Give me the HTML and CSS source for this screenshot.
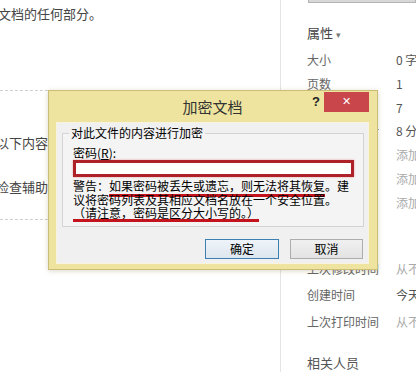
FILE: index.html
```html
<!DOCTYPE html>
<html lang="zh-CN">
<head>
  <meta charset="UTF-8" />
  <meta name="viewport" content="width=device-width, initial-scale=1.0"/>
  <title>信息 - 加密文档</title>
  <link rel="stylesheet" href="styles.css">
</head>
<body>
  <div class="page">
    <div class="left">
      <p class="intro">文档的任何部分。</p>
      <div class="dash dash-top"></div>
      <p class="note note-1">以下内容</p>
      <p class="note note-2">检查辅助</p>
      <div class="dash dash-bottom"></div>
    </div>

    <div class="right">
      <div class="thumb"></div>
      <h3 class="group-title">属性 <span class="caret">▾</span></h3>
      <div class="props">
        <span class="label">大小</span><span class="value">0 字节</span>
        <span class="label">页数</span><span class="value">1</span>
        <span class="label">字数</span><span class="value">7</span>
        <span class="label">编辑时间总计</span><span class="value">8 分钟</span>
        <span class="label">标题</span><span class="value muted">添加标题</span>
        <span class="label">标记</span><span class="value muted">添加标记</span>
        <span class="label">备注</span><span class="value muted">添加备注</span>
      </div>
      <h3 class="group-title dates-title">相关日期</h3>
      <div class="props dates">
        <span class="label">上次修改时间</span><span class="value muted">从不</span>
        <span class="label">创建时间</span><span class="value">今天 10:12</span>
        <span class="label">上次打印时间</span><span class="value muted">从不</span>
      </div>
      <h3 class="group-title people-title">相关人员</h3>
    </div>
  </div>

  <div class="dialog">
    <div class="titlebar">
      <span class="title">加密文档</span>
      <span class="help">?</span>
      <span class="close">&#x2715;</span>
    </div>
    <div class="client">
      <fieldset class="group">
        <legend>对此文件的内容进行加密</legend>
        <div class="field-label">密码(<u>R</u>):</div>
        <div class="password"></div>
        <div class="warning">
          <div>警告：<span class="mark">如果密码被丢失或遗忘，则无法将其恢复</span>。建</div>
          <div>议将密码列表及其相应文档名放在一个安全位置。</div>
          <div><span class="mark mark-low">（请注意，密码是区分大小写的。）</span></div>
        </div>
      </fieldset>
      <div class="buttons">
        <button class="btn btn-default">确定</button>
        <button class="btn">取消</button>
      </div>
    </div>
  </div>
</body>
</html>
```

FILE: styles.css
```css
body {
  margin: 0;
  width: 416px;
  height: 372px;
  overflow: hidden;
  position: relative;
  background: #fff;
  font-family: "Noto Sans CJK SC", "Noto Sans", sans-serif;
  color: #444;
}

p, h3 {
  margin: 0;
}

.page {
  display: flex;
  height: 372px;
}

/* left column */

.left {
  width: 280px;
  flex-shrink: 0;
  border-right: 1px solid #e4e4e4;
  padding-top: 4px;
  overflow: hidden;
  white-space: nowrap;
}

.intro {
  font-size: 13px;
  line-height: 20px;
  margin-left: -2px;
  color: #444;
}

.dash {
  width: 262px;
  border-top: 1px dashed #cfcfcf;
}

.dash-top {
  margin-top: 66px;
}

.note {
  font-size: 13px;
  line-height: 20px;
  margin-left: -4px;
  color: #444;
}

.note-1 {
  margin-top: 42px;
}

.note-2 {
  margin-top: 24px;
}

.dash-bottom {
  margin-top: 22px;
}

/* right column */

.right {
  flex: 1;
  padding-left: 26px;
  white-space: nowrap;
  overflow: hidden;
}

.thumb {
  height: 2px;
  margin-left: 1px;
  border: 1px solid #b4b4b4;
  border-top: none;
  background: #d8d8d8;
}

.group-title {
  font-size: 13px;
  font-weight: normal;
  line-height: 20px;
  color: #444;
  margin-top: 20px;
}

.caret {
  font-size: 9px;
  color: #777;
}

.props {
  display: grid;
  grid-template-columns: 89px auto;
  margin-top: 3px;
  font-size: 12px;
  line-height: 23.8px;
}

.label {
  color: #666;
}

.value {
  color: #555;
}

.value.muted {
  color: #aaa;
}

.dates-title {
  margin-top: 11px;
}

.dates {
  margin-top: 10px;
  line-height: 26.5px;
}

.people-title {
  margin-top: 18px;
  color: #555;
}

/* dialog */

.dialog {
  position: absolute;
  left: 48px;
  top: 90px;
  width: 330px;
  height: 180px;
  box-sizing: border-box;
  padding: 0 8px 5px 7px;
  background: #eee49f;
  border: 1px solid #c9bd78;
  box-shadow: 0 1px 5px rgba(120, 100, 40, 0.25);
  color: #000;
}

.titlebar {
  position: relative;
  height: 31px;
  text-align: center;
}

.title {
  display: inline-block;
  margin-top: 6px;
  font-size: 15px;
  line-height: 20px;
  color: #333;
}

.help {
  position: absolute;
  left: 256px;
  top: 3px;
  font-family: "Liberation Sans", sans-serif;
  font-weight: bold;
  font-size: 13px;
  line-height: 16px;
  color: #222;
}

.close {
  position: absolute;
  right: 0;
  top: 1px;
  width: 45px;
  height: 20px;
  background: #c9464b;
  color: #fff;
  font-family: "DejaVu Sans", sans-serif;
  font-size: 11px;
  font-weight: bold;
  line-height: 20px;
  text-align: center;
}

.client {
  height: 142px;
  background: #f0f0f0;
  box-shadow: inset 0 0 0 1px #f7f3dc;
  padding-top: 1px;
  box-sizing: border-box;
}

.group {
  margin: 2px 5px 0 6px;
  padding: 5px 9px 6px 10px;
  border: 1px solid #d3d3d3;
  background: #f4f4f4;
  font-size: 12px;
  white-space: nowrap;
}

.group legend {
  margin-left: -4px;
  padding: 0 2px;
  font-size: 12px;
  line-height: 16px;
}

.field-label {
  line-height: 14px;
}

.password {
  height: 17px;
  box-sizing: border-box;
  border: 3px solid #ae2129;
  background: #fff;
  box-shadow: 0 0 2px #e9a0a0;
}

.warning {
  margin-top: 2px;
  line-height: 13.5px;
}

.mark {
  text-decoration: underline;
  text-decoration-color: #c3141d;
  text-decoration-thickness: 3px;
  text-underline-offset: 3px;
  text-decoration-skip-ink: none;
}

.mark-low {
  text-underline-offset: 1px;
}

.buttons {
  display: flex;
  justify-content: flex-end;
  gap: 11px;
  margin: 12px 6px 0 0;
}

.btn {
  width: 73px;
  height: 20px;
  padding: 0;
  font-family: "Noto Sans CJK SC", sans-serif;
  font-size: 12px;
  line-height: 18px;
  color: #000;
  background: linear-gradient(#f0f0f0, #e3e3e3);
  border: 1px solid #adadad;
}

.btn-default {
  width: 74px;
  border-color: #3c7fb1;
  background: linear-gradient(#eef4f9, #dde6ee);
}
```
